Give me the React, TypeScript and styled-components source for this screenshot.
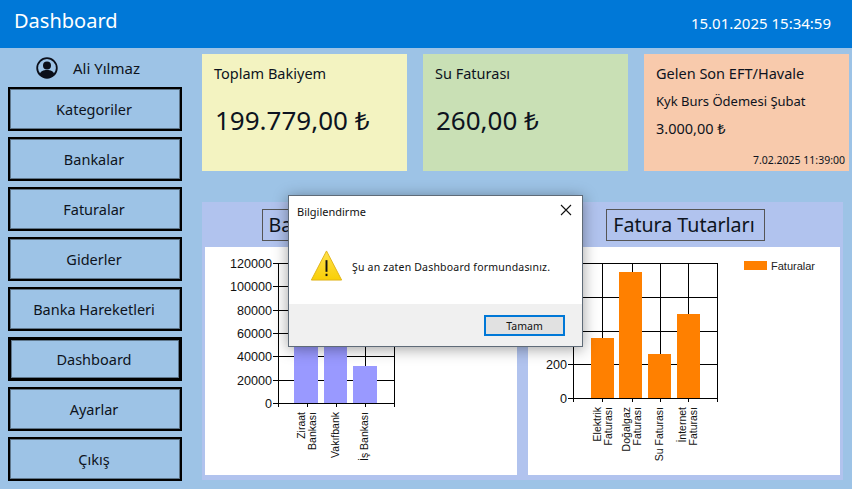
import styled, { createGlobalStyle } from "styled-components";

const FONT = `"Noto Sans", "Open Sans", sans-serif`;

interface Bar {
  left: number;
  right: number;
  top: number;
}

interface AxisTick {
  label: string;
  y: number;
}

interface AxisLabel {
  x: number;
  lines: string[];
}

interface ChartSpec {
  plot: { left: number; right: number; top: number; bottom: number };
  ticks: AxisTick[];
  gridX: number[];
  bars: Bar[];
  labels: AxisLabel[];
  color: string;
}

const bankChart: ChartSpec = {
  plot: { left: 73, right: 189, top: 16, bottom: 156 },
  ticks: [
    { label: "120000", y: 16 },
    { label: "100000", y: 39 },
    { label: "80000", y: 63 },
    { label: "60000", y: 86 },
    { label: "40000", y: 109 },
    { label: "20000", y: 133 },
    { label: "0", y: 156 },
  ],
  gridX: [102, 131, 160],
  bars: [
    { left: 89, right: 113, top: 40 },
    { left: 119, right: 142, top: 60 },
    { left: 148, right: 172, top: 119 },
  ],
  labels: [
    { x: 102, lines: ["Ziraat", "Bankası"] },
    { x: 131, lines: ["Vakıfbank"] },
    { x: 160, lines: ["İş Bankası"] },
  ],
  color: "#9999ff",
};

const billChart: ChartSpec = {
  plot: { left: 45, right: 189, top: 16, bottom: 151 },
  ticks: [
    { label: "800", y: 16 },
    { label: "600", y: 50 },
    { label: "400", y: 84 },
    { label: "200", y: 117 },
    { label: "0", y: 151 },
  ],
  gridX: [74, 104, 132, 160],
  bars: [
    { left: 63, right: 86, top: 91 },
    { left: 91, right: 114, top: 25 },
    { left: 120, right: 143, top: 107 },
    { left: 149, right: 172, top: 67 },
  ],
  labels: [
    { x: 75, lines: ["Elektrik", "Faturası"] },
    { x: 104, lines: ["Doğalgaz", "Faturası"] },
    { x: 132, lines: ["Su Faturası"] },
    { x: 160, lines: ["İnternet", "Faturası"] },
  ],
  color: "#ff8000",
};

const ColumnChart = ({ spec, legend }: { spec: ChartSpec; legend?: string }) => {
  const { plot, ticks, gridX, bars, labels, color } = spec;
  return (
    <svg width="312" height="228" viewBox="0 0 312 228">
      <g stroke="#000" strokeWidth="1" shapeRendering="crispEdges">
        {ticks.map((tick) => (
          <line
            key={tick.label}
            x1={plot.left - 5}
            x2={plot.right}
            y1={tick.y + 0.5}
            y2={tick.y + 0.5}
          />
        ))}
        {gridX.map((x) => (
          <line key={x} x1={x + 0.5} x2={x + 0.5} y1={plot.top} y2={plot.bottom + 4} />
        ))}
        <line x1={plot.left + 0.5} x2={plot.left + 0.5} y1={plot.top} y2={plot.bottom + 4} />
        <line x1={plot.right + 0.5} x2={plot.right + 0.5} y1={plot.top} y2={plot.bottom + 4} />
      </g>
      {bars.map((bar) => (
        <rect
          key={bar.left}
          x={bar.left}
          y={bar.top}
          width={bar.right - bar.left}
          height={plot.bottom - bar.top}
          fill={color}
        />
      ))}
      <g fontFamily="'Liberation Sans', Arial, sans-serif" fill="#111">
        {ticks.map((tick) => (
          <text key={tick.label} x={plot.left - 6} y={tick.y + 5} fontSize="12.6" textAnchor="end">
            {tick.label}
          </text>
        ))}
        {labels.map((label) =>
          label.lines.map((line, index) => {
            const x = label.x + 3 + (index - (label.lines.length - 1) / 2) * 11;
            const y = plot.bottom + 9;
            return (
              <text
                key={line + label.x}
                fontSize="10.5"
                textAnchor="end"
                transform={`translate(${x} ${y}) rotate(-90)`}
              >
                {line}
              </text>
            );
          }),
        )}
      </g>
      {legend && (
        <g>
          <rect x="216" y="14" width="23" height="9" fill={color} />
          <text x="243" y="23" fontSize="11" fontFamily="'Liberation Sans', Arial, sans-serif" fill="#222">
            {legend}
          </text>
        </g>
      )}
    </svg>
  );
};

const UserIcon = () => (
  <svg width="22" height="22" viewBox="0 0 22 22">
    <circle cx="11" cy="11" r="9.8" fill="#9dc3e6" stroke="#0b0f1a" strokeWidth="1.8" />
    <circle cx="11" cy="8.4" r="4" fill="#0b0f1a" />
    <path d="M3.6 17.4c1-3.4 3.8-4.4 7.4-4.4s6.4 1 7.4 4.4c-1.8 2-4.4 3.2-7.4 3.2s-5.6-1.2-7.4-3.2z" fill="#0b0f1a" />
  </svg>
);

const WarningIcon = () => (
  <svg width="33" height="33" viewBox="0 0 34 33">
    <defs>
      <linearGradient id="warn" x1="0" y1="0" x2="0" y2="1">
        <stop offset="0" stopColor="#ffe14d" />
        <stop offset="1" stopColor="#f9cf06" />
      </linearGradient>
    </defs>
    <path
      d="M17 1.5L32.6 31.5H1.4z"
      fill="url(#warn)"
      stroke="#e0b418"
      strokeWidth="1"
      strokeLinejoin="round"
    />
    <rect x="16" y="11" width="2" height="12" fill="#111" />
    <rect x="16" y="25" width="2" height="2.4" fill="#111" />
  </svg>
);

const CloseIcon = () => (
  <svg width="12" height="12" viewBox="0 0 12 12">
    <path d="M1 1l10 10M11 1L1 11" stroke="#111" strokeWidth="1.1" fill="none" />
  </svg>
);

const NAV_ITEMS = [
  "Kategoriler",
  "Bankalar",
  "Faturalar",
  "Giderler",
  "Banka Hareketleri",
  "Dashboard",
  "Ayarlar",
  "Çıkış",
];

export default function App() {
  return (
    <>
      <GlobalStyle />
      <Page>
        <Header>
          <HeaderTitle>Dashboard</HeaderTitle>
          <HeaderClock>15.01.2025 15:34:59</HeaderClock>
        </Header>
        <Body>
          <Sidebar>
            <UserRow>
              <UserIcon />
              <UserName>Ali Yılmaz</UserName>
            </UserRow>
            {NAV_ITEMS.map((item) => (
              <NavButton key={item} $active={item === "Dashboard"}>
                {item}
              </NavButton>
            ))}
          </Sidebar>
          <Main>
            <CardRow>
              <Card $bg="#f3f3c1">
                <CardTitle>Toplam Bakiyem</CardTitle>
                <CardValue>199.779,00 ₺</CardValue>
              </Card>
              <Card $bg="#c9e0b5">
                <CardTitle>Su Faturası</CardTitle>
                <CardValue>260,00 ₺</CardValue>
              </Card>
              <Card $bg="#f8caac">
                <CardTitle>Gelen Son EFT/Havale</CardTitle>
                <CardSub>Kyk Burs Ödemesi Şubat</CardSub>
                <CardAmount>3.000,00 ₺</CardAmount>
                <CardDate>7.02.2025 11:39:00</CardDate>
              </Card>
            </CardRow>
            <ChartPanel>
              <ChartColumn>
                <ChartHeading>
                  <ChartTitle>Bankalardaki Bakiye</ChartTitle>
                </ChartHeading>
                <ChartBody>
                  <ColumnChart spec={bankChart} />
                </ChartBody>
              </ChartColumn>
              <ChartColumn>
                <ChartHeading>
                  <ChartTitle>Fatura Tutarları</ChartTitle>
                </ChartHeading>
                <ChartBody>
                  <ColumnChart spec={billChart} legend="Faturalar" />
                </ChartBody>
              </ChartColumn>
            </ChartPanel>
          </Main>
        </Body>
        <Dialog>
          <DialogTitleBar>
            <DialogTitle>Bilgilendirme</DialogTitle>
            <CloseIcon />
          </DialogTitleBar>
          <DialogContent>
            <WarningIcon />
            <DialogMessage>Şu an zaten Dashboard formundasınız.</DialogMessage>
          </DialogContent>
          <DialogFooter>
            <DialogButton>Tamam</DialogButton>
          </DialogFooter>
        </Dialog>
      </Page>
    </>
  );
}

const GlobalStyle = createGlobalStyle`
  html, body {
    margin: 0;
    padding: 0;
    background: #9dc3e6;
    font-family: ${FONT};
  }
`;

const Page = styled.div`
  position: relative;
  width: 852px;
  height: 489px;
  overflow: hidden;
  background: #9dc3e6;
  color: #0d1320;
`;

const Header = styled.header`
  height: 48px;
  background: #0078d7;
  color: #fff;
  display: flex;
  align-items: center;
  justify-content: space-between;
  padding: 0 21px 4px 14px;
  box-sizing: border-box;
`;

const HeaderTitle = styled.div`
  font-size: 20px;
  margin-bottom: 3px;
`;

const HeaderClock = styled.div`
  font-size: 15px;
  margin-top: 2px;
`;

const Body = styled.div`
  display: flex;
`;

const Sidebar = styled.aside`
  width: 202px;
  box-sizing: border-box;
  padding: 6px 0 0 8px;
  display: flex;
  flex-direction: column;
  gap: 6px;
`;

const UserRow = styled.div`
  height: 27px;
  display: flex;
  align-items: center;
  gap: 15px;
  padding-left: 28px;
`;

const UserName = styled.div`
  font-size: 15px;
`;

const NavButton = styled.button<{ $active: boolean }>`
  width: 174px;
  height: 44px;
  box-sizing: border-box;
  background: transparent;
  border: ${(p) => (p.$active ? "3px" : "2px")} solid #000;
  box-shadow: inset 0 0 0 1px rgba(0, 0, 0, 0.4);
  color: inherit;
  font-family: ${FONT};
  font-size: 14.5px;
  padding: 0 2px 0 0;
`;

const Main = styled.main`
  flex: 1;
  padding-top: 6px;
  display: flex;
  flex-direction: column;
  gap: 31px;
`;

const CardRow = styled.div`
  display: flex;
  gap: 16px;
`;

const Card = styled.section<{ $bg: string }>`
  position: relative;
  width: 205px;
  height: 117px;
  box-sizing: border-box;
  padding: 8px 12px;
  background: ${(p) => p.$bg};
`;

const CardTitle = styled.div`
  font-size: 14.5px;
  line-height: 22px;
`;

const CardValue = styled.div`
  font-size: 26px;
  line-height: 36px;
  margin: 18px 0 0 1px;
  white-space: nowrap;
`;

const CardSub = styled.div`
  font-size: 13px;
  line-height: 18px;
  margin-top: 8px;
`;

const CardAmount = styled.div`
  font-size: 14.5px;
  line-height: 20px;
  margin-top: 8px;
`;

const CardDate = styled.div`
  position: absolute;
  right: 4px;
  bottom: 4px;
  font-size: 10.5px;
`;

const ChartPanel = styled.div`
  width: 641px;
  height: 278px;
  box-sizing: border-box;
  padding: 0 3px 5px;
  background: #b1c3ee;
  display: flex;
  gap: 11px;
`;

const ChartColumn = styled.div`
  width: 312px;
  display: flex;
  flex-direction: column;
`;

const ChartHeading = styled.div`
  height: 45px;
  display: flex;
  align-items: flex-start;
  justify-content: center;
  padding: 7px 0 0 3px;
  box-sizing: border-box;
`;

const ChartTitle = styled.div`
  height: 32px;
  box-sizing: border-box;
  padding: 0 9px 0 6px;
  border: 1px solid #555;
  font-size: 19.6px;
  line-height: 30px;
  white-space: nowrap;
`;

const ChartBody = styled.div`
  flex: 1;
  background: #fff;
  display: flex;
`;

const Dialog = styled.div`
  position: absolute;
  left: 288px;
  top: 195px;
  width: 295px;
  height: 152px;
  box-sizing: border-box;
  background: #fff;
  border: 1px solid #5f6b78;
  box-shadow: 0 2px 14px rgba(0, 0, 0, 0.38);
  display: flex;
  flex-direction: column;
`;

const DialogTitleBar = styled.div`
  height: 30px;
  display: flex;
  align-items: center;
  justify-content: space-between;
  padding: 0 10px 2px 8px;
  box-sizing: border-box;
`;

const DialogTitle = styled.div`
  font-size: 11px;
  color: #111;
  margin-top: 2px;
`;

const DialogContent = styled.div`
  flex: 1;
  display: flex;
  align-items: center;
  gap: 9px;
  padding-left: 21px;
`;

const DialogMessage = styled.div`
  font-size: 10.5px;
  color: #111;
  letter-spacing: 0.2px;
  margin-top: 3px;
`;

const DialogFooter = styled.div`
  height: 42px;
  background: #f0f0f0;
  display: flex;
  justify-content: flex-end;
  align-items: flex-start;
  padding: 11px 17px 0 0;
  box-sizing: border-box;
`;

const DialogButton = styled.button`
  width: 81px;
  height: 21px;
  box-sizing: border-box;
  background: #e1e1e1;
  border: 2px solid #0078d7;
  font-family: ${FONT};
  font-size: 10.5px;
  color: #111;
  padding: 0;
`;
